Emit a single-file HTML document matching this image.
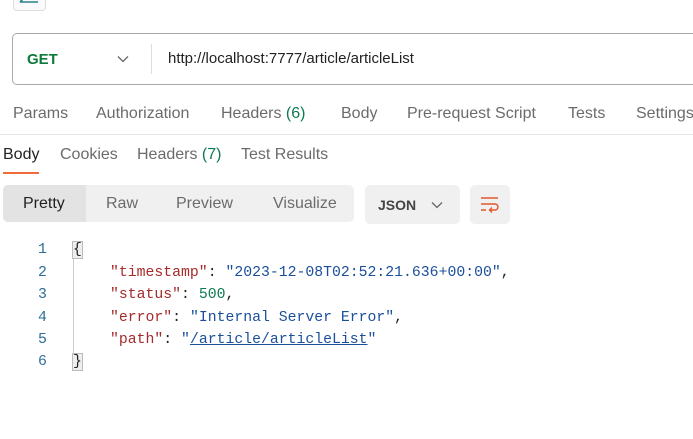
<!DOCTYPE html>
<html><head><style>
body{margin:0;width:693px;height:439px;overflow:hidden;background:#fff;font-family:"Liberation Sans",sans-serif;position:relative}
.a{position:absolute;white-space:nowrap}
.t{font-size:16px;color:#6b6b6b}
.code{font-family:"Liberation Mono",monospace;font-size:14.8px}
.k{color:#a52a2a}.s{color:#1b4f9c}.n{color:#0e7a52}.p{color:#222}
</style></head><body>
<div class="a" style="left:13px;top:-10px;width:31px;height:19px;border:1px solid #ddd;border-radius:4px;background:#fafafa"></div>
<svg class="a" style="left:18px;top:0" width="22" height="6"><path d="M2 2H20M2 2L5 -1" fill="none" stroke="#2a7f8f" stroke-width="1.6"/></svg>
<div class="a" style="left:12px;top:33px;width:690px;height:50px;border:1px solid #a9a9a9;border-radius:5px"></div>
<div class="a" style="left:27px;top:51px;font-size:15px;font-weight:bold;color:#0d7a3a">GET</div>
<svg class="a" style="left:117px;top:55px" width="12" height="8"><path d="M1 1.5L6 6.5L11 1.5" fill="none" stroke="#666" stroke-width="1.3"/></svg>
<div class="a" style="left:151px;top:44px;width:1px;height:30px;background:#ddd"></div>
<div class="a" style="left:168px;top:50px;font-size:15px;color:#222">http://localhost:7777/article/articleList</div>
<div class="a t" style="left:13px;top:105px">Params</div>
<div class="a t" style="left:96px;top:105px">Authorization</div>
<div class="a t" style="left:221px;top:105px">Headers <span style="color:#0e7a52">(6)</span></div>
<div class="a t" style="left:341px;top:105px">Body</div>
<div class="a t" style="left:407px;top:105px">Pre-request Script</div>
<div class="a t" style="left:568px;top:105px">Tests</div>
<div class="a t" style="left:636px;top:105px">Settings</div>
<div class="a" style="left:0;top:134px;width:693px;height:1px;background:#e6e6e6"></div>
<div class="a t" style="left:3px;top:146px;color:#222">Body</div>
<div class="a t" style="left:60px;top:146px">Cookies</div>
<div class="a t" style="left:137px;top:146px">Headers <span style="color:#0e7a52">(7)</span></div>
<div class="a t" style="left:241px;top:146px">Test Results</div>
<div class="a" style="left:3px;top:172px;width:36px;height:2px;background:#f26b3a"></div>
<div class="a" style="left:3px;top:185px;width:351px;height:37px;background:#f0f0f0;border-radius:5px"></div>
<div class="a" style="left:3px;top:185px;width:83px;height:37px;background:#e3e3e3;border-radius:5px 0 0 5px"></div>
<div class="a t" style="left:23px;top:195px;color:#222">Pretty</div>
<div class="a t" style="left:106px;top:195px">Raw</div>
<div class="a t" style="left:176px;top:195px">Preview</div>
<div class="a t" style="left:273px;top:195px">Visualize</div>
<div class="a" style="left:365px;top:185px;width:95px;height:39px;background:#f0f0f0;border-radius:5px"></div>
<div class="a" style="left:378px;top:197px;font-size:14px;font-weight:bold;color:#444">JSON</div>
<svg class="a" style="left:431px;top:201px" width="12" height="8"><path d="M1 1.5L6 6.5L11 1.5" fill="none" stroke="#666" stroke-width="1.3"/></svg>
<div class="a" style="left:470px;top:185px;width:40px;height:39px;background:#f0f0f0;border-radius:5px"></div>
<svg class="a" style="left:479px;top:195px" width="22" height="18"><path d="M2 3H19M2 9H16a3 3 0 0 1 0 6H11M13 12.5L10.5 15L13 17.5M2 15H7" fill="none" stroke="#e2572b" stroke-width="1.4"/></svg>
<div class="a" style="left:73px;top:255px;width:1px;height:116px;background:#ccc"></div>
<div class="code">
<div class="a" style="left:38px;top:242px;color:#2a6e96">1</div>
<div class="a" style="left:38px;top:265px;color:#2a6e96">2</div>
<div class="a" style="left:38px;top:287px;color:#2a6e96">3</div>
<div class="a" style="left:38px;top:310px;color:#2a6e96">4</div>
<div class="a" style="left:38px;top:332px;color:#2a6e96">5</div>
<div class="a" style="left:38px;top:354px;color:#2a6e96">6</div>
<div class="a p" style="left:73px;top:242px;background:#eee;outline:1px solid #bbb">{</div>
<div class="a" style="left:110px;top:265px"><span class="k">"timestamp"</span><span class="p">: </span><span class="s">"2023-12-08T02:52:21.636+00:00"</span><span class="p">,</span></div>
<div class="a" style="left:110px;top:287px"><span class="k">"status"</span><span class="p">: </span><span class="n">500</span><span class="p">,</span></div>
<div class="a" style="left:110px;top:310px"><span class="k">"error"</span><span class="p">: </span><span class="s">"Internal Server Error"</span><span class="p">,</span></div>
<div class="a" style="left:110px;top:332px"><span class="k">"path"</span><span class="p">: </span><span class="s">"<u>/article/articleList</u>"</span></div>
<div class="a p" style="left:73px;top:354px;background:#eee;outline:1px solid #bbb">}</div>
</div>
</body></html>
